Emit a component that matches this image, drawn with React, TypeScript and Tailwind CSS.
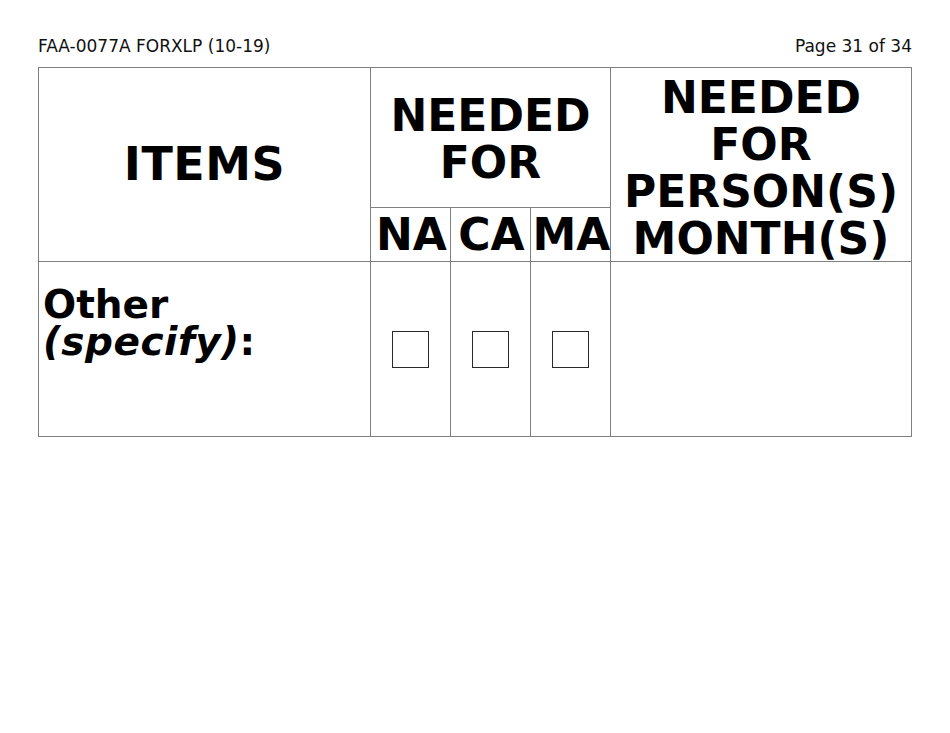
export default function App() {
  const line = "border-[#808080]";
  const big = "font-bold text-[44px] leading-[47px] text-black";

  return (
    <div className="min-h-[733px] w-[950px] bg-white pl-[38px] pt-[36px] font-['DejaVu_Sans',sans-serif] text-black">
      {/* page header */}
      <div className="flex w-[874px] justify-between text-[17px] leading-[20px] text-[#111]">
        <span>FAA-0077A FORXLP (10-19)</span>
        <span>Page 31 of 34</span>
      </div>

      {/* table */}
      <div className={`mt-[11px] grid w-[874px] grid-cols-[332px_80px_80px_80px_300px] grid-rows-[140px_54px_174px] border ${line}`}>
        <div className={`row-span-2 flex items-center justify-center border-r border-b ${line} font-bold text-[46px] leading-[47px] tracking-[0.5px]`}>
          ITEMS
        </div>
        <div className={`col-span-3 flex items-center justify-center border-r border-b ${line} ${big} pt-[3px] text-center`}>
          NEEDED
          <br />
          FOR
        </div>
        <div className={`row-span-2 flex items-center justify-center border-b ${line} ${big} pt-[6px] text-center`}>
          NEEDED
          <br />
          FOR
          <br />
          PERSON(S)
          <br />
          MONTH(S)
        </div>
        {["NA", "CA", "MA"].map((label) => (
          <div key={label} className={`flex items-center justify-center border-r border-b ${line} ${big} pl-[2px]`}>
            {label}
          </div>
        ))}

        <div className={`border-r ${line} pl-[4px] pt-[24px] text-[39px] font-bold leading-[37px]`}>
          Other
          <br />
          <span className="italic tracking-[0.5px]">(specify)</span>:
        </div>
        {["na", "ca", "ma"].map((k) => (
          <div key={k} className={`flex items-center justify-center border-r ${line}`}>
            <div className="h-[37px] w-[37px] border border-[#2a2a2a]" />
          </div>
        ))}
        <div />
      </div>
    </div>
  );
}
